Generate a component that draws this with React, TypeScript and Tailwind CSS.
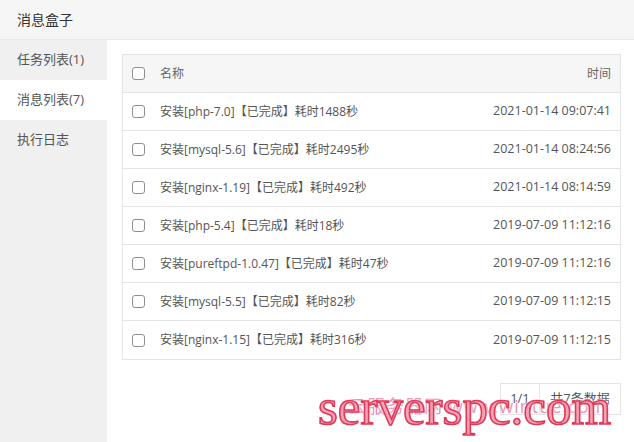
import React from 'react';

const rows = [
  { name: '安装[php-7.0]【已完成】耗时1488秒', time: '2021-01-14 09:07:41' },
  { name: '安装[mysql-5.6]【已完成】耗时2495秒', time: '2021-01-14 08:24:56' },
  { name: '安装[nginx-1.19]【已完成】耗时492秒', time: '2021-01-14 08:14:59' },
  { name: '安装[php-5.4]【已完成】耗时18秒', time: '2019-07-09 11:12:16' },
  { name: '安装[pureftpd-1.0.47]【已完成】耗时47秒', time: '2019-07-09 11:12:16' },
  { name: '安装[mysql-5.5]【已完成】耗时82秒', time: '2019-07-09 11:12:15' },
  { name: '安装[nginx-1.15]【已完成】耗时316秒', time: '2019-07-09 11:12:15' },
];

const tabs = ['任务列表(1)', '消息列表(7)', '执行日志'];

const Checkbox = () => (
  <span className="block w-[13px] h-[13px] rounded-[3px] border border-[#8f8f8f] bg-white" />
);

export default function App() {
  return (
    <div className="relative w-[634px] h-[442px] overflow-hidden bg-white text-[#555] font-['Open_Sans','Noto_Sans_CJK_SC',sans-serif] text-[12px]">
      <div className="h-[40px] flex items-center px-[17px] bg-[#f6f6f6] border-b border-[#e9e9e9] text-[14px] text-[#333]">
        消息盒子
      </div>
      <div className="flex h-[402px]">
        <div className="w-[107px] bg-[#f0f0f0] flex flex-col">
          {tabs.map((t, i) => (
            <div
              key={t}
              className={`h-[40px] flex items-center pl-[17px] text-[13px] text-[#555] ${i === 1 ? 'bg-white' : ''}`}
            >
              {t}
            </div>
          ))}
        </div>
        <div className="flex-1 pt-[14px] pl-[15px] pr-[13px]">
          <div className="border border-[#e4e4e4]">
            <div className="h-[38px] flex items-center bg-[#f6f6f6] border-b border-[#e4e4e4] pl-[9px] pr-[9px]">
              <Checkbox />
              <span className="ml-[15px] text-[#666]">名称</span>
              <span className="ml-auto text-[#666]">时间</span>
            </div>
            {rows.map((r, i) => (
              <div
                key={i}
                className={`h-[38px] flex items-center pl-[9px] pr-[9px] ${i < rows.length - 1 ? 'border-b border-[#e4e4e4]' : ''}`}
              >
                <Checkbox />
                <span className="ml-[15px] text-[#555]">{r.name}</span>
                <span className="ml-auto text-[#555] text-[12.5px]">{r.time}</span>
              </div>
            ))}
          </div>
          <div className="flex justify-end mt-[23px]">
            <div className="flex h-[32px] border border-[#e4e4e4] text-[#555] text-[13px]">
              <span className="w-[39px] flex items-center justify-center border-r border-[#e4e4e4]">1/1</span>
              <span className="w-[80px] flex items-center justify-center">共7条数据</span>
            </div>
          </div>
        </div>
      </div>
      {/* watermark overlay */}
      <div className="absolute left-[348px] top-[393px] text-[18px] text-[#d9608a]/70 tracking-[1px] pointer-events-none">
        云服务器网 www.wintue.com
      </div>
      <div className="absolute left-[318px] top-[382px] font-['Liberation_Serif',serif] text-[51px] leading-none text-[#f5a3b4] [-webkit-text-stroke:1.6px_#e03a5a] [text-shadow:0_0_3px_#fff,0_0_4px_#fff] pointer-events-none">
        serverspc.com
      </div>
    </div>
  );
}
